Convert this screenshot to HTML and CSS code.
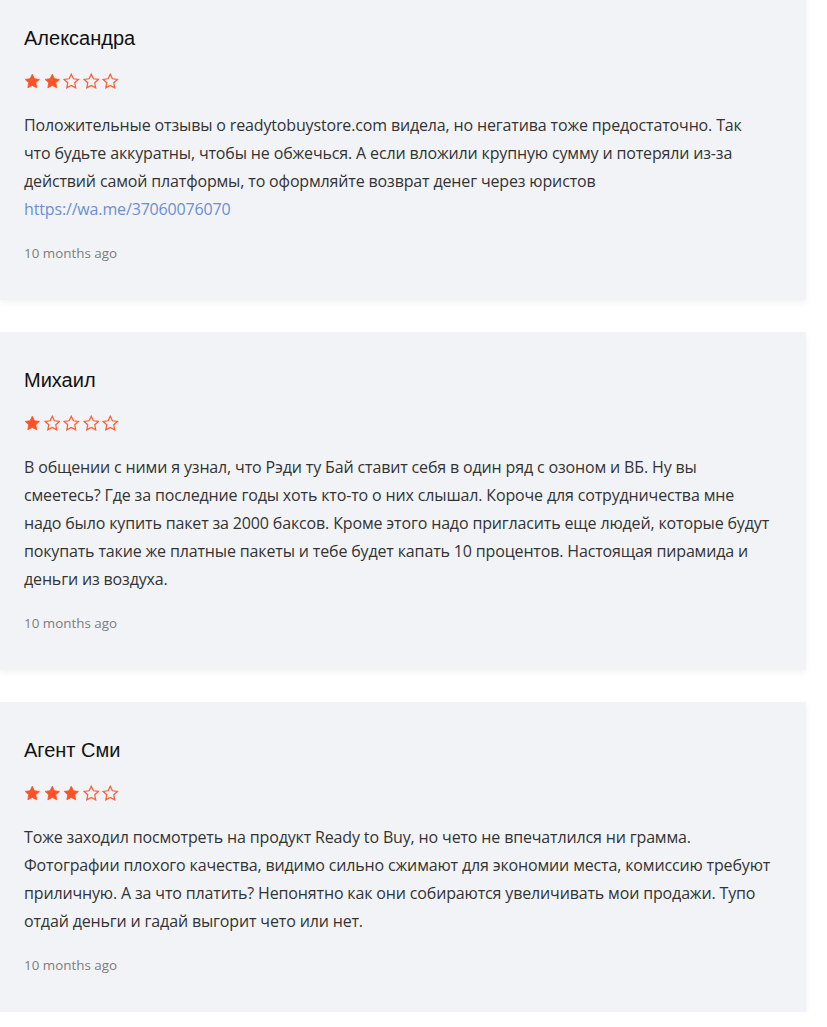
FILE: index.html
```html
<!DOCTYPE html>
<html lang="ru">
<head>
<meta charset="utf-8">
<link rel="stylesheet" href="styles.css">
<title>Отзывы</title>
</head>
<body>
<svg width="0" height="0" class="defs" aria-hidden="true">
  <defs>
    <path id="star" d="M8 1.2l2.1 4.4 4.8.6-3.5 3.3.9 4.8L8 12 3.7 14.3l.9-4.8L1.1 6.2l4.8-.6z"/>
  </defs>
</svg>
<div class="list">
  <div class="card">
    <div class="name">Александра</div>
    <div class="stars">
      <svg class="star full" viewBox="0 0 16 16"><use href="#star"/></svg>
      <svg class="star full" viewBox="0 0 16 16"><use href="#star"/></svg>
      <svg class="star empty" viewBox="0 0 16 16"><use href="#star"/></svg>
      <svg class="star empty" viewBox="0 0 16 16"><use href="#star"/></svg>
      <svg class="star empty" viewBox="0 0 16 16"><use href="#star"/></svg>
    </div>
    <p class="text">Положительные отзывы о readytobuystore.com видела, но негатива тоже предостаточно. Так что будьте аккуратны, чтобы не обжечься. А если вложили крупную сумму и потеряли из-за действий самой платформы, то оформляйте возврат денег через юристов <a class="link" href="#">https://wa.me/37060076070</a></p>
    <div class="date">10 months ago</div>
  </div>
  <div class="card">
    <div class="name">Михаил</div>
    <div class="stars">
      <svg class="star full" viewBox="0 0 16 16"><use href="#star"/></svg>
      <svg class="star empty" viewBox="0 0 16 16"><use href="#star"/></svg>
      <svg class="star empty" viewBox="0 0 16 16"><use href="#star"/></svg>
      <svg class="star empty" viewBox="0 0 16 16"><use href="#star"/></svg>
      <svg class="star empty" viewBox="0 0 16 16"><use href="#star"/></svg>
    </div>
    <p class="text">В общении с ними я узнал, что Рэди ту Бай ставит себя в один ряд с озоном и ВБ. Ну вы смеетесь? Где за последние годы хоть кто-то о них слышал. Короче для сотрудничества мне надо было купить пакет за 2000 баксов. Кроме этого надо пригласить еще людей, которые будут покупать такие же платные пакеты и тебе будет капать 10 процентов. Настоящая пирамида и деньги из воздуха.</p>
    <div class="date">10 months ago</div>
  </div>
  <div class="card">
    <div class="name">Агент Сми</div>
    <div class="stars">
      <svg class="star full" viewBox="0 0 16 16"><use href="#star"/></svg>
      <svg class="star full" viewBox="0 0 16 16"><use href="#star"/></svg>
      <svg class="star full" viewBox="0 0 16 16"><use href="#star"/></svg>
      <svg class="star empty" viewBox="0 0 16 16"><use href="#star"/></svg>
      <svg class="star empty" viewBox="0 0 16 16"><use href="#star"/></svg>
    </div>
    <p class="text">Тоже заходил посмотреть на продукт Ready to Buy, но чето не впечатлился ни грамма. Фотографии плохого качества, видимо сильно сжимают для экономии места, комиссию требуют приличную. А за что платить? Непонятно как они собираются увеличивать мои продажи. Тупо отдай деньги и гадай выгорит чето или нет.</p>
    <div class="date">10 months ago</div>
  </div>
</div>
</body>
</html>
```

FILE: styles.css
```css
html, body {
  margin: 0;
  padding: 0;
  background: #ffffff;
}

body {
  font-family: "Open Sans", "Noto Sans", sans-serif;
  overflow: hidden;
}

.defs {
  position: absolute;
  width: 0;
  height: 0;
}

.list {
  width: 806px;
  margin-top: -10px;
  display: flex;
  flex-direction: column;
  gap: 32px;
}

.card {
  background: #f2f3f7;
  box-shadow: 0 3px 6px rgba(0, 0, 0, 0.05);
  padding: 34px 35px 37px 24px;
  display: flex;
  flex-direction: column;
}

.name {
  font-family: "Liberation Sans", Arial, sans-serif;
  font-size: 20px;
  line-height: 28px;
  color: #111111;
}

.stars {
  display: flex;
  gap: 3px;
  margin-top: 21px;
  height: 16px;
}

.star {
  width: 16.5px;
  height: 16.5px;
  display: block;
}

.star.full {
  fill: #ff5126;
  stroke: #ff5126;
  stroke-width: 0.8;
  stroke-linejoin: round;
}

.star.empty {
  fill: none;
  stroke: #ff5c33;
  stroke-width: 1.2;
  stroke-linejoin: miter;
}

.text {
  margin: 22px 0 0;
  font-size: 16px;
  letter-spacing: -0.15px;
  line-height: 28px;
  color: #333333;
}

.link {
  color: #6a8fd2;
  text-decoration: none;
}

.date {
  margin-top: 20px;
  font-size: 13.4px;
  line-height: 20px;
  color: #7d7d7d;
}
```
